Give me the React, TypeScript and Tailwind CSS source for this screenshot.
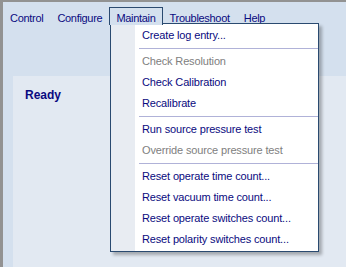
import React from "react";

type Item = { label: string; disabled?: boolean } | "sep";

const menu: Item[] = [
  { label: "Create log entry..." },
  "sep",
  { label: "Check Resolution", disabled: true },
  { label: "Check Calibration" },
  { label: "Recalibrate" },
  "sep",
  { label: "Run source pressure test" },
  { label: "Override source pressure test", disabled: true },
  "sep",
  { label: "Reset operate time count..." },
  { label: "Reset vacuum time count..." },
  { label: "Reset operate switches count..." },
  { label: "Reset polarity switches count..." },
];

const top = ["Control", "Configure", "Maintain", "Troubleshoot", "Help"];

export default function App() {
  return (
    <div
      className="relative w-[346px] h-[267px] overflow-hidden bg-[#d4e0ee] border-t-2 border-l-[3px] border-[#929292] flex flex-col text-[11px] text-[#0a0a80]"
      style={{ fontFamily: '"Liberation Sans", Arial, sans-serif' }}
    >
      {/* menu bar */}
      <div className="flex items-start pt-[5px] h-[74px]">
        {top.map((t) => (
          <div
            key={t}
            className={
              t === "Maintain"
                ? "relative z-10 h-[18px] px-[6px] pt-[2px] border border-b-0 border-[#2a4a70] bg-[#d4e0ee] tracking-[-0.3px]"
                : "h-[18px] px-[6px] pt-[2px] border border-transparent tracking-[-0.3px]"
            }
          >
            {t}
          </div>
        ))}
      </div>

      {/* content panel */}
      <div className="flex-1 ml-[10px] bg-[#e2e9f2] pl-[12px] pt-[10px]">
        <div className="font-bold text-[12px] text-[#0a0a80]">Ready</div>
      </div>

      {/* dropdown */}
      <div className="absolute left-[107px] top-[21px] w-[209px] h-[229px] bg-white border border-[#2a4a70] flex shadow-[3px_3px_3px_rgba(0,0,0,0.28)]">
        <div className="w-[24px] bg-[#e8ecf2]" />
        <div className="flex-1 flex flex-col pt-[1px]">
          {menu.map((m, i) =>
            m === "sep" ? (
              <div key={i} className="h-[5px] flex items-center pl-[4px]">
                <div className="h-px w-full bg-[#b0b2d8]" />
              </div>
            ) : (
              <div
                key={i}
                className={
                  "h-[21px] flex items-center pl-[7px] tracking-[-0.15px] " +
                  (m.disabled ? "text-[#808080]" : "text-[#0a0a80]")
                }
              >
                {m.label}
              </div>
            )
          )}
        </div>
      </div>
    </div>
  );
}
